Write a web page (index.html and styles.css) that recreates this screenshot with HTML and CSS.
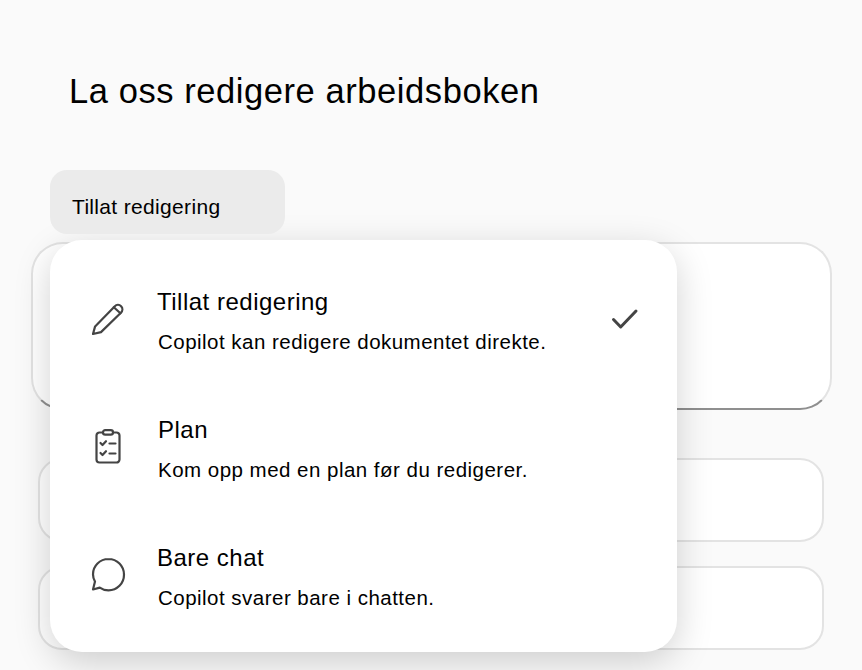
FILE: index.html
```html
<!DOCTYPE html>
<html lang="nb">
<head>
<meta charset="utf-8">
<title>La oss redigere arbeidsboken</title>
<link rel="stylesheet" href="styles.css">
</head>
<body>
<main class="page">
  <h1 class="title">La oss redigere arbeidsboken</h1>
  <div class="mode-button">Tillat redigering</div>
  <div class="card card-main"></div>
  <div class="card card-second"></div>
  <div class="card card-third"></div>
  <div class="menu">
    <div class="item item-edit">
      <svg class="icon" viewBox="0 0 36 36" fill="none" stroke="#444" stroke-width="2.200" stroke-linejoin="round" stroke-linecap="round"><path d="M3 34l2.100-7.600L24.600 6.400c2-2 4.700-2 6.500-.2s1.700 4.500-.2 6.500L11 32.100z"/><path d="M23.800 7.300l6.600 6"/></svg>
      <div class="texts">
        <div class="name">Tillat redigering</div>
        <div class="desc">Copilot kan redigere dokumentet direkte.</div>
      </div>
      <svg class="check" viewBox="0 0 28 22" fill="none" stroke="#444" stroke-width="3" stroke-linecap="round" stroke-linejoin="round"><path d="M2.500 11.500l7.200 7.500L25 3"/></svg>
    </div>
    <div class="item item-plan">
      <svg class="icon" viewBox="0 0 36 36" fill="none" stroke="#444" stroke-width="2.200" stroke-linecap="round" stroke-linejoin="round"><path d="M13 4.500H9.500a3 3 0 0 0-3 3v24a3 3 0 0 0 3 3h17a3 3 0 0 0 3-3v-24a3 3 0 0 0-3-3H23"/><rect x="13" y="2.200" width="10" height="4.500" rx="2.200"/><path d="M10.500 15l2 2 3.500-3.800M10.500 25l2 2 3.500-3.800M19.500 15.500h6M19.500 25.500h6"/></svg>
      <div class="texts">
        <div class="name">Plan</div>
        <div class="desc">Kom opp med en plan før du redigerer.</div>
      </div>
    </div>
    <div class="item item-chat">
      <svg class="icon" viewBox="0 0 36 36" fill="none" stroke="#444" stroke-width="2.200" stroke-linejoin="round"><path d="M18.500 3C9.900 3 3 9.800 3 18.200c0 2.700.700 5.200 2 7.400L3 33.500l6.800-1.900c2.500 1.800 5.500 2.800 8.700 2.800 8.600 0 15.500-7 15.500-15.700S27.100 3 18.500 3z"/></svg>
      <div class="texts">
        <div class="name">Bare chat</div>
        <div class="desc">Copilot svarer bare i chatten.</div>
      </div>
    </div>
  </div>
</main>
</body>
</html>
```
FILE: styles.css
```css
* { box-sizing: border-box; }
html, body { margin: 0; height: 100%; }
body {
  background: #fafafa;
  color: #000;
  font-family: "Liberation Sans", Arial, sans-serif;
  overflow: hidden;
}
.page {
  position: relative;
  width: 862px;
  height: 670px;
  padding-top: 70px;
  overflow: hidden;
}
.title {
  margin: 0 0 0 69px;
  font-size: 34.500px;
  font-weight: 400;
  letter-spacing: 0.57px;
  line-height: 42px;
}
.mode-button {
  position: relative;
  z-index: 2;
  width: 235px;
  height: 64px;
  margin: 58px 0 0 50px;
  padding-left: 22px;
  border-radius: 17px;
  background: #ebebeb;
  font-size: 21px;
  letter-spacing: 0.33px;
  line-height: 73px;
}
.card {
  background: #fff;
  border: 2px solid #e3e3e3;
}
.card-main {
  width: 801px;
  height: 168px;
  margin: 8px 0 0 31px;
  border-radius: 32px;
  border-bottom-color: #8f8f8f;
}
.card-second, .card-third {
  width: 786px;
  height: 84px;
  margin-left: 38px;
  border-radius: 24px;
}
.card-second { margin-top: 48px; }
.card-third { margin-top: 24px; }
.menu {
  position: absolute;
  left: 50px;
  top: 240px;
  width: 627px;
  height: 412px;
  border-radius: 32px;
  background: #fff;
  box-shadow: 0 10px 36px rgba(0, 0, 0, 0.18);
}
.item {
  position: absolute;
  left: 0;
  right: 0;
  height: 90px;
}
.item-edit { top: 46px; }
.item-plan { top: 174px; }
.item-chat { top: 302px; }
.icon {
  position: absolute;
  left: 40px;
  width: 36px;
  height: 36px;
  top: 14px;
}
.texts {
  position: absolute;
  left: 107px;
  top: 0;
}
.name {
  font-size: 24px;
  letter-spacing: 0.5px;
  line-height: 32px;
  white-space: nowrap;
}
.item-plan .name { margin-left: 1px; }
.desc {
  margin-top: 11px;
  margin-left: 1px;
  font-size: 20.500px;
  letter-spacing: 0.48px;
  line-height: 26px;
  white-space: nowrap;
}
.check {
  position: absolute;
  left: 561px;
  top: 22px;
  width: 28px;
  height: 22px;
}
```
